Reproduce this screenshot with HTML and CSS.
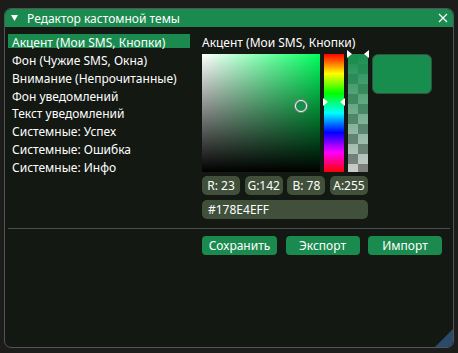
FILE: index.html
```html
<!DOCTYPE html>
<html lang="ru">
<head>
<meta charset="utf-8">
<title>Редактор кастомной темы</title>
<link rel="stylesheet" href="styles.css">
</head>
<body>
<div class="window">
  <div class="titlebar">
    <svg class="collapse" width="7" height="6" viewBox="0 0 7 6"><polygon points="0,0 7,0 3.5,6" fill="#fff"/></svg>
    <span class="title">Редактор кастомной темы</span>
    <svg class="close" width="10" height="10" viewBox="0 0 10 10"><path d="M1 1 L9 9 M9 1 L1 9" stroke="#fff" stroke-width="1.2" fill="none"/></svg>
  </div>
  <div class="body">
    <div class="main">
      <ul class="list">
        <li class="item selected">Акцент (Мои SMS, Кнопки)</li>
        <li class="item">Фон (Чужие SMS, Окна)</li>
        <li class="item">Внимание (Непрочитанные)</li>
        <li class="item">Фон уведомлений</li>
        <li class="item">Текст уведомлений</li>
        <li class="item">Системные: Успех</li>
        <li class="item">Системные: Ошибка</li>
        <li class="item">Системные: Инфо</li>
      </ul>
      <div class="editor">
        <div class="label">Акцент (Мои SMS, Кнопки)</div>
        <div class="picker">
          <div class="sv"><span class="cursor"></span></div>
          <div class="hue"><span class="mk mk-l hue-mk"></span><span class="mk mk-r hue-mk"></span></div>
          <div class="alpha"><span class="mk mk-l alpha-mk"></span><span class="mk mk-r alpha-mk"></span></div>
          <div class="preview"></div>
        </div>
        <div class="channels">
          <div class="field">R: 23</div>
          <div class="field">G:142</div>
          <div class="field">B: 78</div>
          <div class="field">A:255</div>
        </div>
        <div class="hex">#178E4EFF</div>
      </div>
    </div>
    <div class="sep"></div>
    <div class="actions">
      <button class="btn btn-save">Сохранить</button>
      <button class="btn">Экспорт</button>
      <button class="btn">Импорт</button>
    </div>
  </div>
  <div class="grip"></div>
</div>
</body>
</html>
```

FILE: styles.css
```css
* { box-sizing: border-box; margin: 0; padding: 0; }
html, body { width: 458px; height: 353px; overflow: hidden; }
body {
  background: #1c1d1a;
  font-family: "Noto Sans", "DejaVu Sans", sans-serif;
  font-size: 12px;
  color: #fff;
}
.window {
  position: relative;
  margin: 8px 0 0 4px;
  width: 450px;
  height: 340px;
  border: 1px solid #505458;
  border-radius: 7px;
  background: #141813;
  overflow: hidden;
}
.titlebar {
  height: 18px;
  background: #1a8a4e;
  display: flex;
  align-items: flex-start;
  padding: 0 5px 0 6px;
}
.collapse { flex: none; margin-top: 6px; }
.title { margin-left: 9px; white-space: nowrap; flex: 1; line-height: 19px; height: 18px; }
.close { flex: none; margin-top: 4px; }
.body { padding: 7px 3px 0 3px; }
.main { display: flex; align-items: flex-start; }
.list { list-style: none; width: 182px; flex: none; }
.item {
  height: 13.85px;
  line-height: 18.7px;
  margin-bottom: 4px;
  padding-left: 4px;
  white-space: nowrap;
}
.item.selected { background: #1a8a4e; }
.editor { margin-left: 12px; width: 240px; }
.label { height: 18px; line-height: 18.7px; margin-bottom: 2px; white-space: nowrap; }
.picker { display: flex; gap: 4px; height: 118px; align-items: flex-start; }
.sv {
  position: relative;
  flex: none;
  width: 118px;
  height: 118px;
  background: linear-gradient(to top, #000, rgba(0,0,0,0)), linear-gradient(to right, #fff, #00ff5e);
}
.cursor {
  position: absolute;
  left: 93px;
  top: 46px;
  width: 12px;
  height: 12px;
  border-radius: 50%;
  background: #178e4e;
  border: 1.5px solid #fff;
  box-shadow: 0 0 0 1px #808080;
}
.hue {
  position: relative;
  flex: none;
  width: 20px;
  height: 118px;
  background: linear-gradient(to bottom, #f00, #ff0 16.67%, #0f0 33.33%, #0ff 50%, #00f 66.67%, #f0f 83.33%, #f00);
}
.alpha {
  position: relative;
  flex: none;
  width: 20px;
  height: 118px;
  background: linear-gradient(rgba(23,142,78,1), rgba(23,142,78,0)), repeating-conic-gradient(#ccc 0 25%, #808080 0 50%) 0 0 / 20px 20px;
}
.mk { position: absolute; width: 0; height: 0; border-top: 4px solid transparent; border-bottom: 4px solid transparent; }
.mk-l { left: -1px; border-left: 5px solid #fff; }
.mk-r { right: -1px; border-right: 5px solid #fff; }
.hue-mk { top: 43.5px; }
.alpha-mk { top: -4px; }
.preview {
  flex: none;
  width: 60px;
  height: 40px;
  background: #178e4e;
  border: 1px solid #34503f;
  border-radius: 6px;
}
.channels {
  display: grid;
  grid-template-columns: repeat(4, 1fr);
  gap: 4.6px;
  width: 166px;
  margin-top: 4px;
}
.field {
  height: 19px;
  line-height: 19.8px;
  background: #40503a;
  border-radius: 5px;
  text-align: center;
  white-space: nowrap;
}
.hex {
  width: 166px;
  height: 19px;
  line-height: 19.8px;
  margin-top: 5px;
  background: #40503a;
  border-radius: 5px;
  padding-left: 6px;
}
.sep { height: 1px; background: #4a4d52; margin-top: 9px; }
.actions { display: flex; gap: 8.5px; margin: 7px 0 0 194px; }
.btn {
  width: 74px;
  height: 19px;
  border: 0;
  border-radius: 4px;
  background: #1a8a4e;
  color: #fff;
  font: inherit;
  line-height: 19.8px;
  padding: 0;
  text-align: center;
}
.btn-save { width: 75px; }
.grip {
  position: absolute;
  right: 0;
  bottom: 0;
  width: 18px;
  height: 18px;
  background: #2b4a6a;
  clip-path: polygon(100% 0, 100% 100%, 0 100%);
}
```
